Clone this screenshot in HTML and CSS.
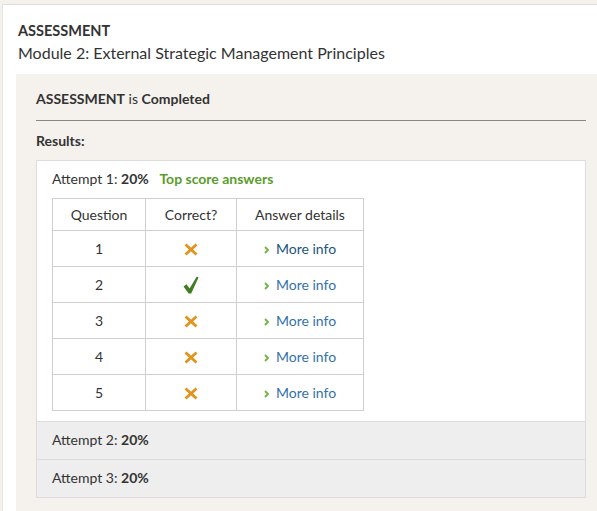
FILE: index.html
```html
<!DOCTYPE html>
<html lang="en">
  <head>
    <meta charset="UTF-8" />
    <title>Assessment</title>
    <link rel="stylesheet" href="styles.css">
  </head>
  <body>
    <div class="card">
      <div class="heading">
        <div class="kicker">ASSESSMENT</div>
        <div class="title">Module 2: External Strategic Management Principles</div>
      </div>
      <div class="panel">
        <p class="status"><b>ASSESSMENT</b> is <b>Completed</b></p>
        <hr class="rule" />
        <p class="results-label">Results:</p>
        <div class="results">
          <div class="attempt open">
            <div class="attempt-head">
              Attempt 1: <b>20%</b>
              <a class="top-score" href="#">Top score answers</a>
            </div>
            <table class="answers">
              <colgroup>
                <col class="c1" />
                <col class="c2" />
                <col class="c3" />
              </colgroup>
              <thead>
                <tr>
                  <th>Question</th>
                  <th>Correct?</th>
                  <th>Answer details</th>
                </tr>
              </thead>
              <tbody>
                <tr>
                  <td>1</td>
                  <td><svg class="mark" width="14" height="13" viewBox="0 0 14 13"><path d="M1.5 1.5 L12.5 11.5 M12.5 1.5 L1.5 11.5" stroke="#e4921b" stroke-width="2.8" fill="none"/></svg></td>
                  <td><a class="more visited" href="#"><svg class="chev" width="5" height="8" viewBox="0 0 5 8"><path d="M1 1 L4 4 L1 7" stroke="#6cb23f" stroke-width="1.8" fill="none"/></svg>More info</a></td>
                </tr>
                <tr>
                  <td>2</td>
                  <td><svg class="mark" width="16" height="18" viewBox="0 0 16 18"><path d="M0.5 10.5 L3.5 8.3 L6.6 12.6 L13.8 0.5 L15.5 1.6 L8.2 17.5 L5.6 17.5 Z" fill="#3e7d22"/></svg></td>
                  <td><a class="more" href="#"><svg class="chev" width="5" height="8" viewBox="0 0 5 8"><path d="M1 1 L4 4 L1 7" stroke="#6cb23f" stroke-width="1.8" fill="none"/></svg>More info</a></td>
                </tr>
                <tr>
                  <td>3</td>
                  <td><svg class="mark" width="14" height="13" viewBox="0 0 14 13"><path d="M1.5 1.5 L12.5 11.5 M12.5 1.5 L1.5 11.5" stroke="#e4921b" stroke-width="2.8" fill="none"/></svg></td>
                  <td><a class="more" href="#"><svg class="chev" width="5" height="8" viewBox="0 0 5 8"><path d="M1 1 L4 4 L1 7" stroke="#6cb23f" stroke-width="1.8" fill="none"/></svg>More info</a></td>
                </tr>
                <tr>
                  <td>4</td>
                  <td><svg class="mark" width="14" height="13" viewBox="0 0 14 13"><path d="M1.5 1.5 L12.5 11.5 M12.5 1.5 L1.5 11.5" stroke="#e4921b" stroke-width="2.8" fill="none"/></svg></td>
                  <td><a class="more" href="#"><svg class="chev" width="5" height="8" viewBox="0 0 5 8"><path d="M1 1 L4 4 L1 7" stroke="#6cb23f" stroke-width="1.8" fill="none"/></svg>More info</a></td>
                </tr>
                <tr>
                  <td>5</td>
                  <td><svg class="mark" width="14" height="13" viewBox="0 0 14 13"><path d="M1.5 1.5 L12.5 11.5 M12.5 1.5 L1.5 11.5" stroke="#e4921b" stroke-width="2.8" fill="none"/></svg></td>
                  <td><a class="more" href="#"><svg class="chev" width="5" height="8" viewBox="0 0 5 8"><path d="M1 1 L4 4 L1 7" stroke="#6cb23f" stroke-width="1.8" fill="none"/></svg>More info</a></td>
                </tr>
              </tbody>
            </table>
          </div>
          <div class="attempt closed">Attempt 2: <b>20%</b></div>
          <div class="attempt closed">Attempt 3: <b>20%</b></div>
        </div>
      </div>
    </div>
  </body>
</html>
```

FILE: styles.css
```css
body {
  margin: 0;
  background: #f5f2ee;
  font-family: Lato, "Open Sans", Arial, sans-serif;
  color: #333;
  font-size: 14px;
  overflow: hidden;
}
.card {
  margin: 4px 0 0 2px;
  background: #fff;
  border-top: 1px solid #dcdcdc;
  border-left: 1px solid #e4e4e4;
  padding: 0 0 0 13px;
}
.heading {
  padding: 16px 0 10px 2px;
}
.kicker {
  font-weight: 700;
  font-size: 14.5px;
  line-height: 20px;
}
.title {
  font-size: 16px;
  line-height: 22px;
  padding-top: 1px;
}
.panel {
  background: #f5f2ee;
  padding: 16px 11px 14px 20px;
}
.status {
  margin: 0;
  line-height: 18px;
}
.rule {
  border: 0;
  border-top: 1px solid #8a8782;
  margin: 12px 0 11px 0;
  height: 0;
}
.results-label {
  margin: 0 0 10px 0;
  font-weight: 700;
  line-height: 18px;
}
.results {
  background: #fff;
  border: 1px solid #dcdcdc;
}
.attempt {
  padding: 9px 15px 10px 15px;
  line-height: 18px;
}
.attempt.open {
  padding-top: 9px;
  padding-bottom: 10px;
}
.attempt.closed {
  background: #eee;
  border-top: 1px solid #dcdcdc;
}
.top-score {
  color: #5a9d2b;
  font-weight: 700;
  text-decoration: none;
  margin-left: 7px;
}
.answers {
  margin-top: 10px;
  border-collapse: collapse;
  table-layout: fixed;
  width: 311px;
}
.answers col.c1 {
  width: 93px;
}
.answers col.c2 {
  width: 91px;
}
.answers col.c3 {
  width: 127px;
}
.answers th,
.answers td {
  border: 1px solid #cfcfcf;
  text-align: center;
  padding: 0;
  font-weight: 400;
}
.answers th {
  height: 31px;
}
.answers td {
  height: 35px;
}
.mark {
  display: inline-block;
  vertical-align: middle;
}
.more {
  color: #3472a8;
  text-decoration: none;
  white-space: nowrap;
}
.more.visited {
  color: #22557e;
}
.chev {
  margin-right: 7px;
  vertical-align: 0;
}
```
